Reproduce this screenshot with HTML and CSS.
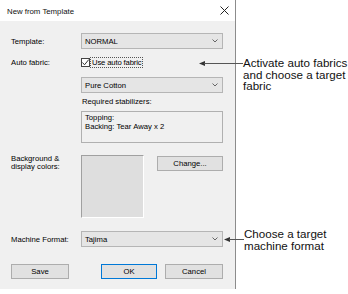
FILE: index.html
```html
<!DOCTYPE html>
<html>
<head>
<meta charset="utf-8">
<link rel="stylesheet" href="styles.css">
</head>
<body>
<div class="page">
  <div class="dialog">
    <div class="titlebar">
      <span class="title">New from Template</span>
      <svg class="close" width="9" height="9" viewBox="0 0 9 9"><path d="M0.5 0.5 L8.5 8.5 M8.5 0.5 L0.5 8.5" stroke="#222" stroke-width="1" fill="none"/></svg>
    </div>
    <div class="content">
      <div class="row r-template">
        <span class="lbl">Template:</span>
        <div class="combo"><span class="val">NORMAL</span><svg class="chev" width="6" height="4" viewBox="0 0 6 4"><path d="M0.5 0.5 L3 3 L5.5 0.5" stroke="#666" fill="none"/></svg></div>
      </div>
      <div class="row r-auto">
        <span class="lbl">Auto fabric:</span>
        <div class="check">
          <span class="cbox"><svg width="9" height="9" viewBox="0 0 9 9"><path d="M1.5 4.5 L3.5 6.8 L7.8 1.5" stroke="#333" stroke-width="1" fill="none"/></svg></span>
          <span class="focus">Use auto fabric</span>
        </div>
      </div>
      <div class="row r-fabric">
        <span class="lbl"></span>
        <div class="combo"><span class="val">Pure Cotton</span><svg class="chev" width="6" height="4" viewBox="0 0 6 4"><path d="M0.5 0.5 L3 3 L5.5 0.5" stroke="#666" fill="none"/></svg></div>
      </div>
      <div class="row r-req">
        <span class="lbl"></span>
        <span class="req">Required stabilizers:</span>
      </div>
      <div class="row r-box">
        <span class="lbl"></span>
        <div class="stabbox">Topping:<br>Backing: Tear Away x 2</div>
      </div>
      <div class="row r-bg">
        <span class="lbl lbl2">Background &amp;<br>display colors:</span>
        <div class="swatch"></div>
        <div class="btn change">Change...</div>
      </div>
      <div class="row r-machine">
        <span class="lbl">Machine Format:</span>
        <div class="combo"><span class="val">Tajima</span><svg class="chev" width="6" height="4" viewBox="0 0 6 4"><path d="M0.5 0.5 L3 3 L5.5 0.5" stroke="#666" fill="none"/></svg></div>
      </div>
      <div class="buttons">
        <div class="btn save">Save</div>
        <div class="btn ok">OK</div>
        <div class="btn cancel">Cancel</div>
      </div>
    </div>
  </div>

  <svg class="arrow a1" width="44" height="7" viewBox="0 0 44 7"><path d="M0 3.5 L6 1 L6 6 Z" fill="#333"/><path d="M5 3.5 H44" stroke="#555" stroke-width="1"/></svg>
  <div class="callout c1">Activate auto fabrics<br>and choose a target<br>fabric</div>

  <svg class="arrow a2" width="20" height="7" viewBox="0 0 20 7"><path d="M0 3.5 L6 1 L6 6 Z" fill="#333"/><path d="M5 3.5 H20" stroke="#555" stroke-width="1"/></svg>
  <div class="callout c2">Choose a target<br>machine format</div>
</div>
</body>
</html>
```

FILE: styles.css
```css
html, body {
  margin: 0;
  padding: 0;
  background: #ffffff;
}
.page {
  position: relative;
  width: 348px;
  height: 294px;
  font-family: "Liberation Sans", Arial, sans-serif;
}
.dialog {
  width: 236px;
  height: 289px;
  box-sizing: border-box;
  border-right: 1px solid #8c8c8c;
  background: #f0f0f0;
  display: flex;
  flex-direction: column;
  font-size: 7.7px;
  color: #000;
}
.titlebar {
  height: 21px;
  background: #ffffff;
  display: flex;
  align-items: center;
  justify-content: space-between;
  padding: 1px 6px 0 7px;
  box-sizing: border-box;
}
.title {
  font-size: 7.8px;
  color: #111;
}
.close {
  display: block;
  margin-top: -2px;
}
.content {
  display: flex;
  flex-direction: column;
  padding: 0 12px 0 11px;
}
.row {
  display: flex;
  align-items: center;
}
.lbl {
  width: 70px;
  flex: none;
}
.combo {
  width: 142px;
  height: 16px;
  box-sizing: border-box;
  background: #e5e5e5;
  border: 1px solid #b5b5b5;
  display: flex;
  align-items: center;
  justify-content: space-between;
  padding: 0 4px 0 3px;
}
.chev {
  display: block;
}
.r-template { margin-top: 12px; }
.r-auto { margin-top: 8px; height: 11px; }
.check {
  display: flex;
  align-items: center;
}
.cbox {
  width: 9px;
  height: 9px;
  box-sizing: border-box;
  border: 1px solid #444;
  background: #fff;
  display: flex;
}
.cbox svg {
  display: block;
  margin: -1px;
}
.focus {
  margin-left: 0;
  padding: 0 1px;
  height: 11px;
  line-height: 10px;
  box-sizing: border-box;
  border: 1px dotted #555;
  letter-spacing: -0.15px;
}
.r-fabric { margin-top: 9px; }
.r-req { margin-top: 3px; height: 10px; }
.req { padding-left: 1px; }
.r-box { margin-top: 5px; }
.stabbox {
  width: 142px;
  height: 32px;
  box-sizing: border-box;
  border: 1px solid #b0b0b0;
  padding: 2px 0 0 3px;
  line-height: 8.5px;
}
.r-bg {
  margin-top: 12px;
  align-items: flex-start;
}
.lbl2 {
  line-height: 8px;
  padding-top: 0px;
}
.swatch {
  width: 63px;
  height: 63px;
  box-sizing: border-box;
  background: #dedede;
  border: 1px solid #fff;
  border-top-color: #a0a0a0;
  border-left-color: #a0a0a0;
}
.btn {
  height: 15px;
  box-sizing: border-box;
  background: #e1e1e1;
  border: 1px solid #adadad;
  display: flex;
  align-items: center;
  justify-content: center;
}
.change {
  width: 66px;
  margin-left: 13px;
  margin-top: 1px;
}
.r-machine { margin-top: 13px; }
.buttons {
  display: flex;
  margin-top: 17px;
}
.save { width: 58px; }
.ok {
  width: 56px;
  margin-left: auto;
  border-color: #0078d7;
}
.cancel {
  width: 58px;
  margin-left: 8px;
}
.arrow {
  position: absolute;
  display: block;
}
.a1 { left: 199px; top: 60px; }
.a2 { left: 224px; top: 236px; }
.callout {
  position: absolute;
  left: 243px;
  font-size: 11.6px;
  line-height: 11.6px;
  color: #111;
  white-space: nowrap;
}
.c1 { top: 57px; }
.c2 { top: 228px; left: 244px; }
```
